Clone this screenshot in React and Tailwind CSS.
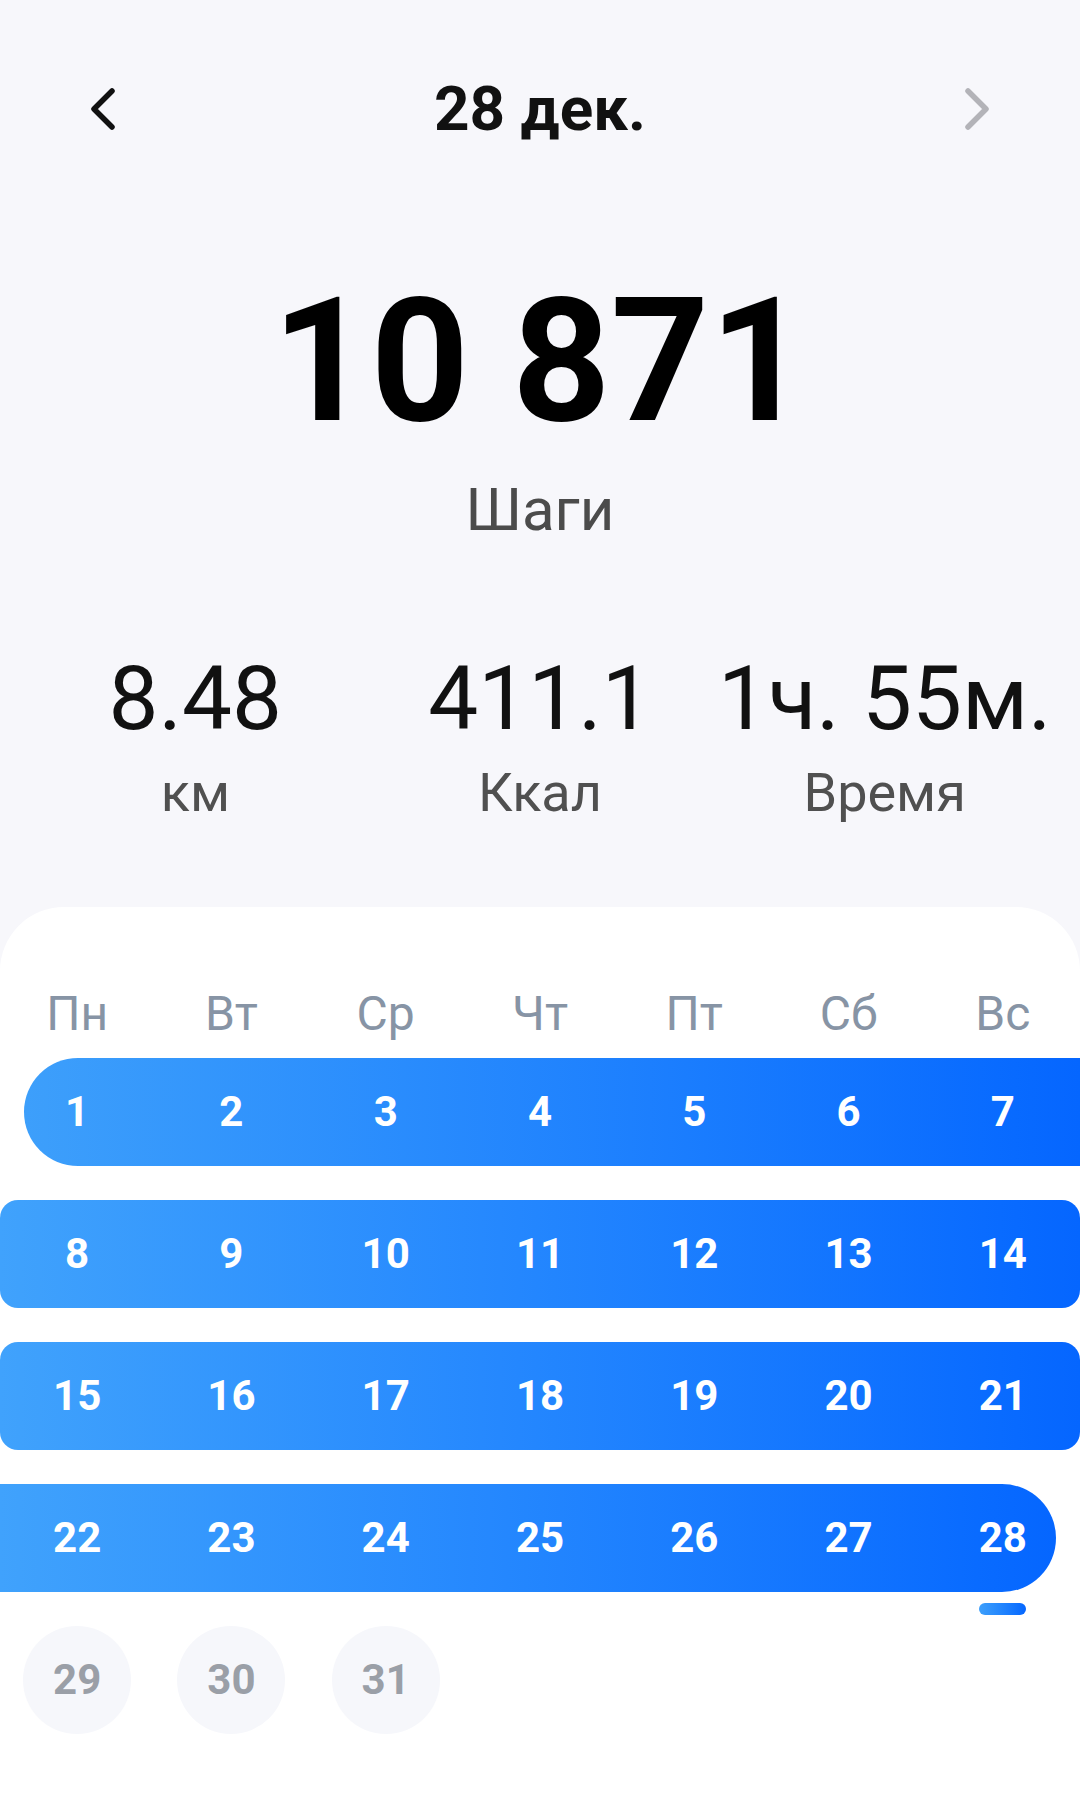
import React from 'react';

const weekdays = ['Пн', 'Вт', 'Ср', 'Чт', 'Пт', 'Сб', 'Вс'];

const stats = [
  { value: '8.48', label: 'км' },
  { value: '411.1', label: 'Ккал' },
  { value: '1ч. 55м.', label: 'Время' },
];

function Chevron({ dir, className }) {
  const d = dir === 'left' ? 'M24 4 L6 22 L24 40' : 'M6 4 L24 22 L6 40';
  return (
    <svg width="30" height="44" viewBox="0 0 30 44" className={className}>
      <path d={d} fill="none" stroke="currentColor" strokeWidth="5.5" strokeLinecap="round" strokeLinejoin="round" />
    </svg>
  );
}

function Day({ n, className = '' }) {
  return (
    <div className={`flex items-center justify-center text-[42px] font-bold leading-none text-white ${className}`}>
      {n}
    </div>
  );
}

export default function App() {
  return (
    <div className="min-h-[1811px] w-[1080px] bg-[#f7f7fb] font-['Roboto',sans-serif] flex flex-col">
      {/* header */}
      <div className="flex items-center justify-between px-[88px] pt-[78px]">
        <Chevron dir="left" className="text-[#111]" />
        <h1 className="text-[62px] font-bold leading-none text-[#111]">28 дек.</h1>
        <Chevron dir="right" className="text-[#b3b3b8]" />
      </div>

      {/* steps */}
      <div className="flex flex-col items-center">
        <p className="mt-[135px] text-[172px] font-bold leading-none text-black">10 871</p>
        <p className="mt-[33px] text-[60px] leading-none text-[#4b4b4b]">Шаги</p>
      </div>

      {/* stats */}
      <div className="grid grid-cols-3 px-[23px] mt-[114px]">
        {stats.map(s => (
          <div key={s.label} className="flex flex-col items-center">
            <p className="text-[89px] leading-none text-[#111] whitespace-nowrap">{s.value}</p>
            <p className="mt-[23px] text-[54px] leading-none text-[#505050]">{s.label}</p>
          </div>
        ))}
      </div>

      {/* calendar */}
      <div className="mt-[87px] flex-1 bg-white rounded-t-[64px] pt-[83px]">
        <div className="grid grid-cols-7">
          {weekdays.map(w => (
            <p key={w} className="text-center text-[48px] leading-none text-[#8794a5]">{w}</p>
          ))}
        </div>

        <div className="mt-[20px] flex flex-col gap-[34px]">
          {/* week 1 */}
          <div className="ml-[24px] h-[108px] rounded-l-full rounded-r-[18px] bg-gradient-to-r from-[#3d9ffb] to-[#0566ff] grid grid-cols-[130.29px_repeat(6,1fr)]">
            <Day n={1} className="pr-[24px]" />
            {[2, 3, 4, 5, 6, 7].map(n => <Day key={n} n={n} />)}
          </div>

          {/* week 2, 3 */}
          {[[8, 9, 10, 11, 12, 13, 14], [15, 16, 17, 18, 19, 20, 21]].map((week, i) => (
            <div key={i} className="h-[108px] rounded-[18px] bg-gradient-to-r from-[#40a2fc] to-[#0566ff] grid grid-cols-7">
              {week.map(n => <Day key={n} n={n} />)}
            </div>
          ))}

          {/* week 4 */}
          <div className="mr-[24px] h-[108px] rounded-l-[18px] rounded-r-full bg-gradient-to-r from-[#40a2fc] to-[#0566ff] grid grid-cols-[repeat(6,1fr)_130.29px]">
            {[22, 23, 24, 25, 26, 27].map(n => <Day key={n} n={n} />)}
            <div className="relative pl-[24px] flex">
              <Day n={28} className="flex-1" />
              <div className="absolute left-[53px] top-[119px] w-[47px] h-[12px] rounded-full bg-gradient-to-r from-[#3d9ffb] to-[#0566ff]" />
            </div>
          </div>

          {/* week 5 */}
          <div className="grid grid-cols-7">
            {[29, 30, 31].map(n => (
              <div key={n} className="flex justify-center">
                <div className="w-[108px] h-[108px] rounded-full bg-[#f6f7fb] flex items-center justify-center text-[42px] font-bold leading-none text-[#9a9fa7]">
                  {n}
                </div>
              </div>
            ))}
          </div>
        </div>
      </div>
    </div>
  );
}
